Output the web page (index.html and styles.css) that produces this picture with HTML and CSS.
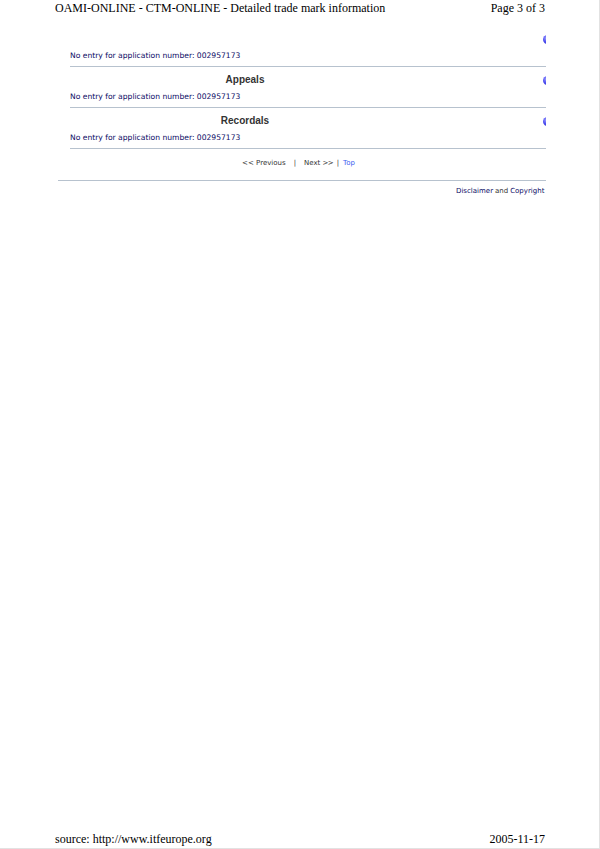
FILE: index.html
```html
<!DOCTYPE html>
<html>
<head>
<meta charset="utf-8">
<link rel="stylesheet" href="styles.css">
</head>
<body>
<div class="page">
  <div class="print-head">
    <span>OAMI-ONLINE - CTM-ONLINE - Detailed trade mark information</span>
    <span>Page 3 of 3</span>
  </div>
  <div class="content">
    <div class="inner">
      <div class="section first">
        <div class="title-row"><span class="title"></span><span class="dot"></span></div>
        <div class="entry">No entry for application number: 002957173</div>
      </div>
      <div class="section">
        <div class="title-row"><span class="title">Appeals</span><span class="dot"></span></div>
        <div class="entry">No entry for application number: 002957173</div>
      </div>
      <div class="section">
        <div class="title-row"><span class="title">Recordals</span><span class="dot"></span></div>
        <div class="entry">No entry for application number: 002957173</div>
      </div>
    </div>
    <div class="nav">
      <span>&lt;&lt; Previous</span><span class="sep">|</span><span>Next <span class="arr">&gt;&gt;</span></span><span class="sep2">|</span><a class="top">Top</a>
    </div>
    <div class="legal"><a class="lnk">Disclaimer</a> and <a class="lnk">Copyright Notice</a></div>
  </div>
  <div class="print-foot">
    <span>source: http://www.itfeurope.org</span>
    <span>2005-11-17</span>
  </div>
</div>
</body>
</html>
```
FILE: styles.css
```css
html, body {
  margin: 0;
  padding: 0;
  background: #fff;
}
.page {
  width: 599px;
  height: 848px;
  border-right: 1px solid #e2e2e2;
  border-bottom: 1px solid #e2e2e2;
  display: flex;
  flex-direction: column;
  overflow: hidden;
}
.print-head, .print-foot {
  display: flex;
  justify-content: space-between;
  padding: 0 54px 0 55px;
  font-family: "Liberation Serif", serif;
  font-size: 12px;
  line-height: 16px;
  color: #000;
}
.print-foot {
  margin-top: auto;
  padding-bottom: 1px;
}
.content {
  margin-left: 58px;
  width: 488px;
  overflow: hidden;
  padding-top: 10px;
}
.inner {
  margin-left: 12px;
  width: 520px;
}
.section {
  border-bottom: 1px solid #b7c2ce;
}
.title-row {
  height: 24px;
  display: flex;
  align-items: center;
  position: relative;
}
.title {
  width: 350px;
  text-align: center;
  font-family: "Liberation Sans", sans-serif;
  font-weight: bold;
  font-size: 10px;
  color: #333;
}
.dot {
  position: absolute;
  left: 473px;
  top: 9px;
  width: 9px;
  height: 9px;
  border-radius: 50%;
  background: radial-gradient(circle at 35% 35%, #9a9aff 0%, #4a4af0 45%, #2020b0 100%);
}
.entry {
  font-family: "DejaVu Sans", Verdana, sans-serif;
  font-size: 7.6px;
  line-height: 12px;
  color: #0c0c66;
  padding-bottom: 4px;
}
.nav {
  height: 23px;
  padding-top: 8px;
  padding-right: 7px;
  display: flex;
  align-items: flex-start;
  justify-content: center;
  font-family: "DejaVu Sans", Verdana, sans-serif;
  font-size: 7px;
  line-height: 12px;
  color: #333;
  border-bottom: 1px solid #b7c2ce;
}
.arr { letter-spacing: -0.8px; }
.sep { margin: 0 8px; }
.sep2 { margin: 0 4px; }
.top { color: #3b5cf0; }
.legal {
  height: 20px;
  display: flex;
  align-items: center;
  white-space: nowrap;
  padding-left: 398px;
  font-family: "DejaVu Sans", Verdana, sans-serif;
  font-size: 7px;
  color: #333;
}
.lnk { color: #0c0c66; }
.legal .lnk:first-child { margin-right: 2px; }
.legal .lnk:last-child { margin-left: 2px; }
```
